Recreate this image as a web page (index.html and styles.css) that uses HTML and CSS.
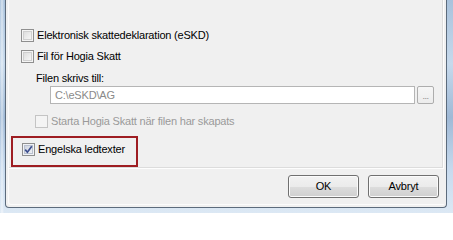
FILE: index.html
```html
<!DOCTYPE html>
<html>
<head>
<meta charset="utf-8">
<link rel="stylesheet" href="styles.css">
</head>
<body>
<div class="window">
  <div class="client">
    <div class="inner">
      <div class="panel">
        <label class="row row-first">
          <span class="box"></span><span class="txt">Elektronisk skattedeklaration (eSKD)</span>
        </label>
        <label class="row row-second">
          <span class="box"></span><span class="txt">Fil för Hogia Skatt</span>
        </label>
        <div class="field-label">Filen skrivs till:</div>
        <div class="field-row">
          <div class="textbox">C:\eSKD\AG</div>
          <div class="browse">...</div>
        </div>
        <label class="row row-disabled">
          <span class="box box-disabled"></span><span class="txt">Starta Hogia Skatt när filen har skapats</span>
        </label>
        <div class="highlight">
          <label class="row row-checked">
            <span class="box box-checked">
              <svg class="tick" width="9" height="9" viewBox="0 0 9 9"><path d="M1.2 4.6 L3.4 7.2 L7.8 1.2" fill="none" stroke="#3c4e8e" stroke-width="1.7"/></svg>
            </span><span class="txt">Engelska ledtexter</span>
          </label>
        </div>
      </div>
      <div class="buttons">
        <div class="btn">OK</div>
        <div class="btn">Avbryt</div>
      </div>
    </div>
  </div>
</div>
</body>
</html>
```
FILE: styles.css
```css
html, body {
  margin: 0;
  padding: 0;
}
body {
  width: 453px;
  height: 213px;
  overflow: hidden;
  font-family: "Liberation Sans", Arial, sans-serif;
  font-size: 11px;
  letter-spacing: -0.2px;
  color: #000;
}
.window {
  box-sizing: border-box;
  width: 453px;
  height: 213px;
  padding: 0 6px 5px 5px;
  background:
    linear-gradient(90deg, rgba(255,255,255,0) 0, rgba(255,255,255,0.55) 2px, rgba(255,255,255,0) 4px),
    linear-gradient(180deg, #a9c2dc 0%, #c6d9ec 30%, #9fb9d6 55%, #c7daee 80%, #dce8f4 100%);
}
.client {
  box-sizing: border-box;
  height: 208px;
  border: 1px solid #5c6b7c;
  border-top: none;
  border-radius: 0 0 4px 4px;
  background: #f0f0f0;
  padding: 0 2px 2px 2px;
}
.inner {
  box-sizing: border-box;
  height: 205px;
  border-left: 1px solid #fbfbfb;
  border-bottom: 1px solid #fbfbfb;
  border-radius: 0 0 0 3px;
  display: flex;
  flex-direction: column;
}
.panel {
  box-sizing: border-box;
  height: 169px;
  border-right: 1px solid #fdfdfd;
  border-bottom: 1px solid #fdfdfd;
  box-shadow: inset -1px -1px 0 #dcdcdc;
  padding: 29px 0 0 12px;
  display: flex;
  flex-direction: column;
  align-items: flex-start;
}
.row {
  display: flex;
  align-items: center;
  height: 13px;
  line-height: 13px;
  white-space: nowrap;
}
.row-second { margin-top: 8px; }
.box {
  box-sizing: border-box;
  width: 13px;
  height: 13px;
  border: 1px solid #8f8f8f;
  background: linear-gradient(135deg, #d6d6d6 0%, #ececec 55%, #fbfbfb 100%);
  box-shadow: inset 0 0 0 1px #f4f4f4, inset 0 0 0 2px #cfcfcf;
  display: flex;
  align-items: center;
  justify-content: center;
  flex: none;
}
.txt { margin-left: 3px; }
.field-label {
  margin: 9px 0 0 15px;
  height: 13px;
  line-height: 13px;
}
.field-row {
  display: flex;
  margin: 1px 0 0 29px;
  height: 18px;
}
.textbox {
  box-sizing: border-box;
  width: 365px;
  height: 18px;
  border: 1px solid #b5b5b5;
  background: #fff;
  color: #8a8a8a;
  padding-left: 4px;
  line-height: 16px;
}
.browse {
  box-sizing: border-box;
  width: 17px;
  height: 18px;
  margin-left: 2px;
  border: 1px solid #adadad;
  border-radius: 2px;
  background: linear-gradient(#f6f6f6, #ececec);
  color: #8a8a8a;
  font-size: 9px;
  line-height: 18px;
  text-align: center;
  letter-spacing: -0.5px;
}
.row-disabled {
  margin: 11px 0 0 14px;
  color: #9a9a9a;
}
.box-disabled {
  border-color: #c4c4c4;
  background: #f4f4f4;
  box-shadow: none;
}
.highlight {
  box-sizing: border-box;
  width: 127px;
  height: 31px;
  margin: 8px 0 0 -10px;
  border: 2px solid #9e1d22;
  padding: 5px 0 0 9px;
}
.box-checked {
  background: linear-gradient(135deg, #c5cbd8 0%, #e2e5ec 55%, #f7f8fa 100%);
  box-shadow: inset 0 0 0 1px #f1f2f5, inset 0 0 0 2px #b9c0cf;
}
.tick { display: block; }
.buttons {
  display: flex;
  justify-content: flex-end;
  gap: 9px;
  padding: 6px 5px 0 0;
}
.btn {
  box-sizing: border-box;
  width: 71px;
  height: 23px;
  border: 1px solid #707070;
  border-radius: 3px;
  background: linear-gradient(180deg, #f2f2f2 0%, #ebebeb 50%, #dddddd 51%, #cfcfcf 100%);
  box-shadow: inset 0 0 0 1px #fbfbfb;
  text-align: center;
  line-height: 21px;
}
```
